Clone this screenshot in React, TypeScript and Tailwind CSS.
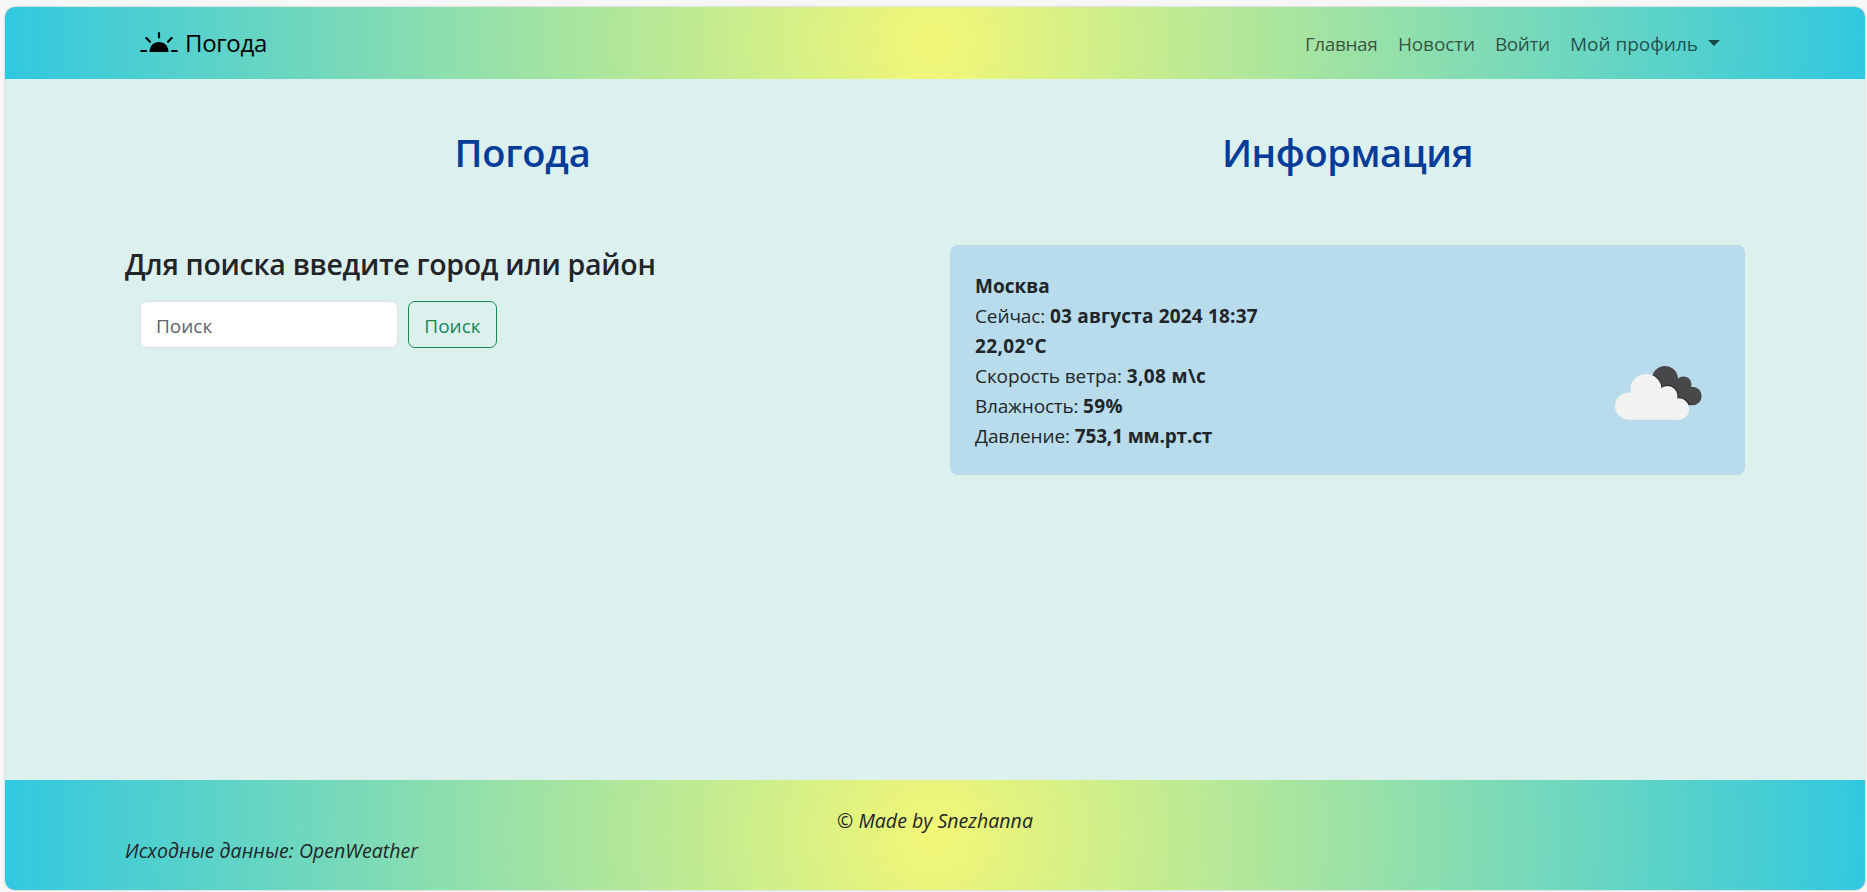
const bar = "bg-[radial-gradient(circle,#f3f776_0%,#30c8e0_100%)]";

const navItems = [
  { label: "Главная", cls: "w-[93px] tracking-[-0.4px]" },
  { label: "Новости", cls: "w-[97px] tracking-[-0.1px]" },
  { label: "Войти", cls: "w-[75px] tracking-[-0.4px]" },
];

const rows = [
  { label: "", value: "Москва", labelCls: "", valueCls: "" },
  { label: "Сейчас: ", value: "03 августа 2024 18:37", labelCls: "tracking-[-0.1px]", valueCls: "tracking-[0.18px]" },
  { label: "", value: "22,02°C", labelCls: "", valueCls: "tracking-[0.4px]" },
  { label: "Скорость ветра: ", value: "3,08 м\\с", labelCls: "tracking-[-0.08px]", valueCls: "tracking-[0.35px]" },
  { label: "Влажность: ", value: "59%", labelCls: "tracking-[-0.2px]", valueCls: "tracking-[0.3px]" },
  { label: "Давление: ", value: "753,1 мм.рт.ст", labelCls: "tracking-[-0.1px]", valueCls: "tracking-[-0.15px]" },
];

function SunriseIcon() {
  return (
    <svg width="38" height="20" viewBox="0 0 38 20" className="mr-[7px] mb-[2px] shrink-0 overflow-visible">
      <path d="M9.5 20C9.5 14 13.5 10 19 10S28.5 14 28.5 20Z" fill="#000" />
      <path
        d="M19 1v4.5M6.3 6l3.7 3.7M31.7 6l-3.7 3.7M1.2 19h4.8M32 19h4.8"
        stroke="#000"
        strokeWidth="2.2"
        strokeLinecap="round"
      />
    </svg>
  );
}

function CloudIcon() {
  return (
    <svg width="87" height="55" viewBox="0 0 87 55">
      <g fill="#48484a">
        <circle cx="50" cy="13" r="13" />
        <circle cx="68.5" cy="18.5" r="8" />
        <circle cx="77.5" cy="30" r="9.2" />
        <path d="M45 13h20l11 26.2H60Z" />
      </g>
      <g fill="none" stroke="#2c2c2e" strokeWidth="1.2">
        <path d="M38.5 9.5A15.5 15.5 0 0 1 46.8 21" />
        <path d="M48 20.5A10.5 10.5 0 0 1 62.8 32" />
        <path d="M63.5 31.8A11 11 0 0 1 74 38.6" />
      </g>
      <g fill="#f2f2f1">
        <circle cx="13.5" cy="40" r="13.5" />
        <circle cx="31" cy="23.5" r="15.5" />
        <circle cx="52.5" cy="30" r="10" />
        <circle cx="63.5" cy="43" r="10.7" />
        <path d="M13.5 30 31 15 52 30 63.5 43V53.7H13.5Z" />
      </g>
    </svg>
  );
}

export default function App() {
  return (
    <div className="h-[892px] overflow-hidden bg-[#f7f7f7] pt-[7px] pl-[5px] font-['Open_Sans','Noto_Sans',sans-serif] text-[19px] leading-[30px] text-[#212529]">
      <div className="flex h-[883px] w-[1860px] flex-col overflow-hidden rounded-[10px] bg-[#dcf0ee] shadow-[0_0_2px_rgba(0,0,0,0.3)]">
        <header className={`flex h-[72px] shrink-0 items-center justify-between pr-[145px] pl-[135px] ${bar}`}>
          <a className="flex items-center text-[24px] text-black">
            <SunriseIcon />
            <span className="tracking-[-0.3px]">Погода</span>
          </a>
          <nav className="flex items-center pt-[2px] text-black/65">
            {navItems.map((n) => (
              <a key={n.label} className={n.cls}>{n.label}</a>
            ))}
            <a className="flex items-center">
              Мой профиль
              <span className="mb-[2px] ml-[10px] border-x-[6px] border-t-[6px] border-x-transparent border-t-black/65" />
            </a>
          </nav>
        </header>
        <main className="flex h-[701px] shrink-0 justify-between px-[120px]">
          <section className="w-[795px] pt-[49px]">
            <h1 className="text-center text-[38px] leading-[48px] font-semibold tracking-[-0.2px] text-[#053c9a]">Погода</h1>
            <h2 className="mt-[70px] text-[28.5px] leading-[36px] font-semibold tracking-[-0.29px]">
              Для поиска введите город или район
            </h2>
            <form className="mt-[19px] ml-[15px] flex gap-[10px]">
              <input
                placeholder="Поиск"
                className="h-[47px] w-[258px] rounded-[7px] border border-[#dee2e6] bg-white px-[15px] pt-[2px] placeholder:text-[#5f6468]"
              />
              <button type="button" className="h-[47px] w-[89px] rounded-[7px] border border-[#198754] pt-[2px] text-[#198754]">
                Поиск
              </button>
            </form>
          </section>
          <section className="w-[795px] pt-[49px]">
            <h1 className="text-center text-[38px] leading-[48px] font-semibold tracking-[-0.4px] text-[#053c9a]">Информация</h1>
            <div className="mt-[69px] flex h-[230px] justify-between rounded-[8px] bg-[#b8dceb] pt-[26px] pr-[43px] pl-[25px]">
              <div>
                {rows.map((r) => (
                  <div key={r.value}>
                    <span className={r.labelCls}>{r.label}</span>
                    <b className={r.valueCls}>{r.value}</b>
                  </div>
                ))}
              </div>
              <div className="pt-[95px]">
                <CloudIcon />
              </div>
            </div>
          </section>
        </main>
        <footer className={`h-[110px] shrink-0 px-[120px] pt-[26px] text-[19.5px] tracking-[0.04px] italic ${bar}`}>
          <p className="text-center">© Made by Snezhanna</p>
          <p>Исходные данные: OpenWeather</p>
        </footer>
      </div>
    </div>
  );
}
